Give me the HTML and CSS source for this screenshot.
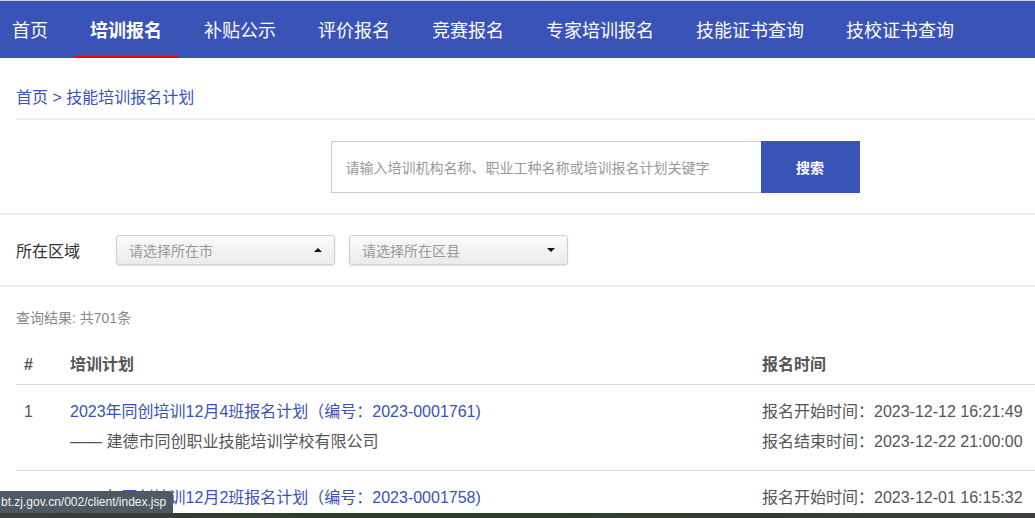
FILE: index.html
```html
<!DOCTYPE html>
<html lang="zh-CN">
<head>
<meta charset="utf-8">
<title>技能培训报名计划</title>
<link rel="stylesheet" href="styles.css">
</head>
<body>
<div class="page">
  <nav class="topnav">
    <a class="nav-item first">首页</a>
    <a class="nav-item active">培训报名</a>
    <a class="nav-item">补贴公示</a>
    <a class="nav-item">评价报名</a>
    <a class="nav-item">竞赛报名</a>
    <a class="nav-item">专家培训报名</a>
    <a class="nav-item">技能证书查询</a>
    <a class="nav-item">技校证书查询</a>
  </nav>

  <div class="crumb">首页 &gt; 技能培训报名计划</div>

  <div class="search-row">
    <div class="search-input">请输入培训机构名称、职业工种名称或培训报名计划关键字</div>
    <div class="search-btn">搜索</div>
  </div>

  <div class="filter-row">
    <span class="filter-label">所在区域</span>
    <div class="select"><span>请选择所在市</span><i class="caret up"></i></div>
    <div class="select"><span>请选择所在区县</span><i class="caret down"></i></div>
  </div>

  <div class="result-count">查询结果: 共701条</div>

  <div class="table">
    <div class="thead">
      <div class="c-no">#</div>
      <div class="c-plan">培训计划</div>
      <div class="c-time">报名时间</div>
    </div>
    <div class="trow">
      <div class="c-no">1</div>
      <div class="c-plan">
        <div class="plan-link">2023年同创培训12月4班报名计划（编号：2023-0001761)</div>
        <div class="plan-org">—— 建德市同创职业技能培训学校有限公司</div>
      </div>
      <div class="c-time">
        <div>报名开始时间：2023-12-12 16:21:49</div>
        <div>报名结束时间：2023-12-22 21:00:00</div>
      </div>
    </div>
    <div class="trow">
      <div class="c-no">2</div>
      <div class="c-plan">
        <div class="plan-link">2023年同创培训12月2班报名计划（编号：2023-0001758)</div>
        <div class="plan-org">—— 建德市同创职业技能培训学校有限公司</div>
      </div>
      <div class="c-time">
        <div>报名开始时间：2023-12-01 16:15:32</div>
        <div>报名结束时间：2023-12-11 21:00:00</div>
      </div>
    </div>
  </div>
</div>

<div class="status-tip">bt.zj.gov.cn/002/client/index.jsp</div>
<div class="bottom-strip"></div>
</body>
</html>
```

FILE: styles.css
```css
html, body {
  margin: 0;
  padding: 0;
  overflow: hidden;
  background: #fff;
}
body {
  font-family: "Liberation Sans", "Noto Sans CJK SC", sans-serif;
  color: #333;
  width: 1035px;
  height: 518px;
  position: relative;
}
.page {
  width: 1190px;
}

/* top navigation */
.topnav {
  display: flex;
  height: 57px;
  background: #3953b7;
  border-top: 1px solid #c8cfe6;
  gap: 10px;
}
.nav-item {
  display: flex;
  align-items: center;
  padding: 0 16px;
  height: 55px;
  color: #fff;
  font-size: 18px;
  border-bottom: 2px solid transparent;
  white-space: nowrap;
}
.nav-item.first {
  padding-left: 12px;
}
.nav-item.active {
  font-weight: bold;
  border-bottom-color: #ff0000;
}

/* breadcrumb */
.crumb {
  margin: 28px 0 0 16px;
  line-height: 24px;
  padding-bottom: 8px;
  font-size: 16px;
  color: #3953b7;
  border-bottom: 2px solid #eeeeee;
}

/* search */
.search-row {
  display: flex;
  justify-content: center;
  padding: 21px 0 20px;
  border-bottom: 2px solid #eeeeee;
}
.search-input {
  box-sizing: border-box;
  width: 430px;
  height: 52px;
  border: 1px solid #cccccc;
  border-right: none;
  padding-left: 14px;
  display: flex;
  align-items: center;
  font-size: 14px;
  color: #999;
  white-space: nowrap;
}
.search-btn {
  width: 99px;
  height: 52px;
  background: #3953b7;
  color: #fff;
  font-size: 14px;
  font-weight: bold;
  display: flex;
  align-items: center;
  justify-content: center;
}

/* filter */
.filter-row {
  display: flex;
  align-items: center;
  padding: 20px 0 20px 16px;
  border-bottom: 2px solid #eeeeee;
}
.filter-label {
  font-size: 16px;
  color: #333;
  width: 100px;
}
.select {
  box-sizing: border-box;
  width: 219px;
  height: 30px;
  margin-right: 14px;
  border: 1px solid #cfcfcf;
  border-radius: 3px;
  background: linear-gradient(#fafafa, #ebebeb);
  box-shadow: 0 1px 2px rgba(0,0,0,0.12);
  display: flex;
  align-items: center;
  justify-content: space-between;
  padding: 0 12px 0 12px;
  font-size: 14px;
  color: #999;
}
.caret {
  width: 0;
  height: 0;
  border-left: 4px solid transparent;
  border-right: 4px solid transparent;
}
.caret.up {
  border-bottom: 4px solid #111;
}
.caret.down {
  border-top: 4px solid #111;
}

/* results */
.result-count {
  margin: 21px 0 0 16px;
  line-height: 20px;
  font-size: 14px;
  color: #888;
}

.table {
  margin: 17px 0 0 16px;
}
.thead, .trow {
  display: grid;
  grid-template-columns: 54px 692px 1fr;
}
.thead {
  font-size: 16px;
  font-weight: bold;
  color: #555;
  line-height: 22px;
  padding: 9px 0 8px;
  border-bottom: 1px solid #dddddd;
}
.c-no {
  padding-left: 8px;
}
.trow {
  font-size: 16px;
  line-height: 30px;
  color: #555;
  padding: 12px 0 13px;
  border-bottom: 1px solid #dddddd;
}
.plan-link {
  color: #3953b7;
  white-space: nowrap;
}
.plan-org {
  color: #555;
}
.c-time {
  white-space: nowrap;
}

/* overlays */
.status-tip {
  position: absolute;
  left: 0;
  bottom: 5px;
  height: 22px;
  padding: 0 7px 0 1px;
  background: #4f5963;
  color: #f2f2f2;
  font-size: 12px;
  line-height: 22px;
  border-top-right-radius: 3px;
}
.bottom-strip {
  position: absolute;
  left: 0;
  right: 0;
  bottom: 0;
  height: 5px;
  background: linear-gradient(90deg, #3a3f3a, #2f3a2c 40%, #3c3f3b);
}
```
